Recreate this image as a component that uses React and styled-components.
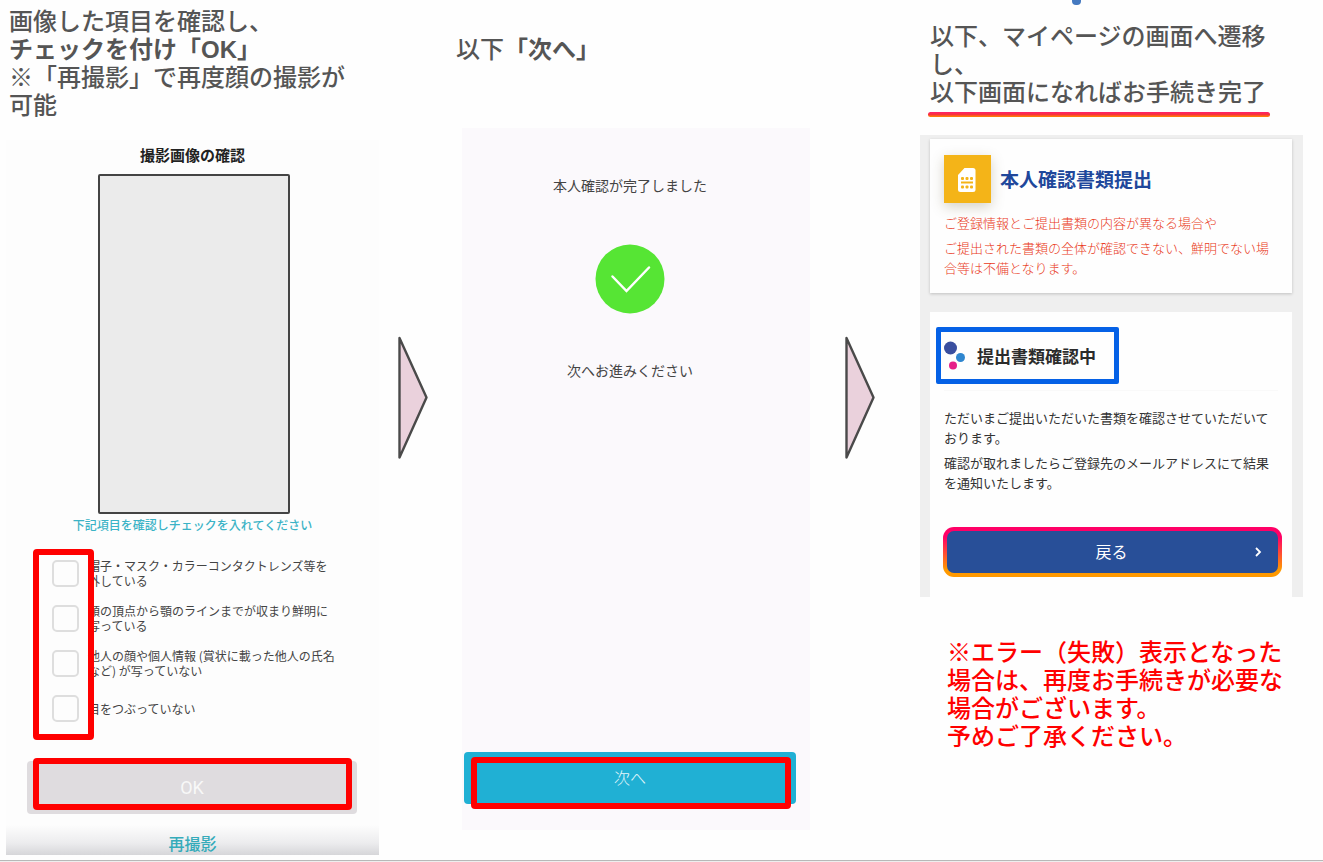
import React from "react";
import styled, { createGlobalStyle } from "styled-components";

const GlobalStyle = createGlobalStyle`
  body {
    margin: 0;
    background-color: #fefefe;
    font-family: "Noto Sans CJK JP", sans-serif;
    color: #333;
  }

  button {
    font-family: inherit;
    cursor: pointer;
  }
`;

const Page = styled.div`
  display: flex;
  flex-direction: column;
  min-height: 100vh;
`;

const Steps = styled.main`
  flex: 1;
  display: grid;
  grid-template-columns: 373fr 77px 354fr 110px 383fr;
  align-items: start;
  padding: 0 20px 4px 6px;
`;

const BottomRule = styled.footer`
  height: 1px;
  border-top: 1px solid #b8b8b8;
  background-color: #eee;
`;

const Step = styled.section`
  position: relative;
  min-width: 0;
  padding-top: ${props => props.$top}px;
`;

const Lead = styled.h2`
  margin: 0;
  padding-left: ${props => props.$indent || 0}px;
  font-family: "Liberation Sans", "Noto Sans CJK JP", sans-serif;
  font-size: 24px;
  font-weight: 500;
  line-height: 28px;
  white-space: nowrap;
  color: #555;

  strong {
    font-weight: bold;
  }
`;

const ArrowCell = styled.div`
  display: flex;
  justify-content: center;
  padding: 336px 10px 0 0;
`;

/* Red marker drawn over the controls the reader has to touch */
const Marker = styled.span`
  position: absolute;
  box-sizing: border-box;
  border: 6px solid #f00;
  border-radius: 4px;
  pointer-events: none;
`;

const PhotoPanel = styled.div`
  display: flex;
  flex-direction: column;
  margin-top: 20px;
  padding-top: 5px;
  background-color: #fdfdfd;
`;

const PanelTitle = styled.h3`
  margin: 0;
  font-size: 15px;
  line-height: 20px;
  text-align: center;
  color: #222;
`;

const Photo = styled.div`
  box-sizing: border-box;
  width: 192px;
  height: 340px;
  margin: 9px 89px 0 auto;
  border: 2px solid #444;
  border-radius: 2px;
  background-color: #ebebeb;
`;

const Hint = styled.p`
  margin: 1px 0 14px;
  font-size: 12px;
  font-weight: 500;
  line-height: 20px;
  text-align: center;
  color: #3bb3c6;
`;

const CheckList = styled.ul`
  position: relative;
  display: grid;
  gap: 15px;
  margin: 0 0 0 27px;
  padding: 9px 0 17px 19px;
  list-style: none;
`;

const CheckListMarker = styled(Marker)`
  top: 0;
  bottom: 0;
  left: 0;
  width: 61px;
`;

const CheckRow = styled.li`
  display: flex;
  align-items: center;
  gap: 9px;
  min-height: 30px;
`;

const CheckBox = styled.input`
  appearance: none;
  flex: none;
  box-sizing: border-box;
  width: 27px;
  height: 27px;
  margin: 0;
  border: 2px solid #dedede;
  border-radius: 5px;
  background-color: #fdfdfd;

  &:checked {
    background-color: #3bb3c6;
  }
`;

const CheckLabel = styled.label`
  max-width: 251px;
  font-size: 12px;
  line-height: 15px;
  color: #444;
`;

const ButtonWrap = styled.div`
  position: relative;
  margin: 21px 22px 0 21px;
`;

const OkButton = styled.button`
  display: block;
  width: 100%;
  height: 53px;
  padding: 0;
  border: 0;
  border-radius: 4px;
  background-color: #dfdcdf;
  font-family: Roboto, sans-serif;
  font-size: 18px;
  color: #f8f8f8;
`;

const OkMarker = styled(Marker)`
  top: -3px;
  left: 6px;
  right: 5px;
  height: 52px;
`;

const RetakeBar = styled.div`
  display: flex;
  justify-content: center;
  margin-top: 11px;
  padding: 8px 0 2px;
  background: linear-gradient(#fdfdfd, #ececee 60%, #d6d6d9);
`;

const RetakeButton = styled.button`
  padding: 0;
  border: 0;
  background: none;
  font-size: 16px;
  font-weight: 500;
  line-height: 20px;
  color: #35abba;
`;

const DonePanel = styled.div`
  display: flex;
  flex-direction: column;
  box-sizing: border-box;
  min-height: 702px;
  margin: 64px 0 0 6px;
  padding: 47px 14px 26px 2px;
  background-color: #fbf9fc;

  svg {
    align-self: center;
    margin: 49px 0 46px;
  }
`;

const DoneText = styled.p`
  margin: 0;
  font-size: 14px;
  line-height: 20px;
  text-align: center;
  color: #444;
`;

const NextWrap = styled.div`
  position: relative;
  margin-top: auto;
`;

const NextButton = styled.button`
  display: block;
  width: 100%;
  height: 52px;
  padding: 0 0 2px;
  border: 0;
  border-radius: 4px;
  background-color: #20b0d4;
  font-size: 16px;
  font-weight: 300;
  color: #e4f7fb;
`;

const NextMarker = styled(Marker)`
  top: 5px;
  left: 7px;
  right: 5px;
  height: 52px;
`;

const BlueTip = styled.span`
  position: absolute;
  top: 0;
  left: 152px;
  width: 9px;
  height: 5px;
  border-radius: 0 0 4px 4px;
  background-color: #4579c0;
`;

const Underline = styled.div`
  max-width: 342px;
  height: 5px;
  margin: 5px 0 0 8px;
  border-radius: 3px;
  background: linear-gradient(#ff1f6b, #f8333c 50%, #ff8a00);
`;

const MyPage = styled.div`
  margin-top: 18px;
  padding: 4px 11px 0 10px;
  background-color: #efefef;
`;

const Card = styled.article`
  padding: ${props => props.$padding};
  background-color: #fefefe;
  box-shadow: 0 1px 3px rgba(0, 0, 0, 0.2);

  & + & {
    margin-top: 19px;
    box-shadow: none;
  }
`;

const CardHeader = styled.header`
  display: flex;
  align-items: center;
  gap: 9px;
  margin-bottom: 10px;
`;

const SimBadge = styled.span`
  width: 47px;
  height: 48px;
  background-color: #f4b418;
  box-shadow: 0 4px 12px rgba(90, 80, 40, 0.25);
`;

const CardTitle = styled.h3`
  margin: 0;
  font-size: 19px;
  line-height: 28px;
  color: #20479b;
`;

const CardText = styled.p`
  margin: 0;
  font-size: 13px;
  font-weight: ${props => (props.$warn ? 300 : 400)};
  line-height: 20px;
  color: ${props => (props.$warn ? "#e93a22" : "#333")};

  & + & {
    margin-top: 5px;
  }
`;

const StatusBox = styled.div`
  display: flex;
  align-items: center;
  gap: 11px;
  box-sizing: border-box;
  width: 183px;
  height: 57px;
  margin-left: -8px;
  padding-left: 3px;
  border: 5px solid #0561e6;
  border-radius: 2px;
`;

const StatusTitle = styled.h3`
  margin: 0;
  font-size: 17px;
  line-height: 24px;
  white-space: nowrap;
  color: #2b2b2b;
`;

const Divider = styled.hr`
  height: 1px;
  margin: 6px 0 17px;
  border: 0;
  background-color: #f9f9f9;
`;

const BackButton = styled.button`
  display: grid;
  grid-template-columns: 14px 1fr 14px;
  align-items: center;
  box-sizing: border-box;
  width: calc(100% + 5px);
  height: 50px;
  margin: 34px 0 0 -1px;
  padding: 0 13px 2px 11px;
  border: 4px solid transparent;
  border-radius: 11px;
  background:
    linear-gradient(#284f98, #284f98) padding-box,
    linear-gradient(#ff0066 20%, #ff9900 85%) border-box;
  font-size: 16px;
  color: #fff;

  span {
    grid-column: 2;
  }
`;

const Notice = styled(Lead)`
  margin: 42px 0 0;
  color: #f00;
`;

const checks = [
  "帽子・マスク・カラーコンタクトレンズ等を外している",
  "額の頂点から顎のラインまでが収まり鮮明に写っている",
  "他人の顔や個人情報 (賞状に載った他人の氏名など) が写っていない",
  "目をつぶっていない"
];

function Arrow() {
  return (
    <ArrowCell>
      <svg width="30" height="124" viewBox="0 0 30 124" aria-hidden="true">
        <path
          d="M1.5 2 L28.5 61.5 L1.5 121.5 Z"
          fill="#ead1dc"
          stroke="#4a4a4a"
          strokeWidth="2.4"
          strokeLinejoin="round"
        />
      </svg>
    </ArrowCell>
  );
}

function SimIcon() {
  return (
    <svg width="47" height="48" viewBox="0 0 47 48" aria-hidden="true">
      <path
        d="M20.5 13H29a2.5 2.5 0 0 1 2.5 2.5V34.5a2.5 2.5 0 0 1-2.5 2.5H16.5a2.5 2.5 0 0 1-2.5-2.5V20Z"
        fill="#fff"
      />
      <g fill="#f4b418">
        <path d="M17 26.5h12v2H17z" />
        <rect x="17" y="22" width="3" height="3" rx="1" />
        <rect x="21.5" y="22" width="3" height="3" rx="1" />
        <rect x="26" y="22" width="3" height="3" rx="1" />
        <rect x="17" y="30.5" width="3" height="3" rx="1" />
        <rect x="21.5" y="30.5" width="3" height="3" rx="1" />
        <rect x="26" y="30.5" width="3" height="3" rx="1" />
      </g>
    </svg>
  );
}

function PhotoStep() {
  return (
    <Step $top={8}>
      <Lead $indent={3}>
        画像した項目を確認し、
        <br />
        <strong>チェックを付け「OK」</strong>
        <br />
        ※「再撮影」で再度顔の撮影が
        <br />
        可能
      </Lead>
      <PhotoPanel>
        <PanelTitle>撮影画像の確認</PanelTitle>
        <Photo />
        <Hint>下記項目を確認しチェックを入れてください</Hint>
        <CheckList>
          {checks.map((text, i) => (
            <CheckRow key={text}>
              <CheckBox type="checkbox" id={`check-${i}`} />
              <CheckLabel htmlFor={`check-${i}`}>{text}</CheckLabel>
            </CheckRow>
          ))}
          <CheckListMarker as="li" />
        </CheckList>
        <ButtonWrap>
          <OkButton type="button">OK</OkButton>
          <OkMarker />
        </ButtonWrap>
        <RetakeBar>
          <RetakeButton type="button">再撮影</RetakeButton>
        </RetakeBar>
      </PhotoPanel>
    </Step>
  );
}

function DoneStep() {
  return (
    <Step $top={36}>
      <Lead>
        以下<strong>「次へ」</strong>
      </Lead>
      <DonePanel>
        <DoneText>本人確認が完了しました</DoneText>
        <svg width="70" height="70" viewBox="0 0 70 70" aria-hidden="true">
          <circle cx="35" cy="35" r="34.5" fill="#56e534" />
          <path
            d="M17.5 32.5 L31.5 47 L54 23.5"
            fill="none"
            stroke="#fff"
            strokeWidth="2.5"
            strokeLinecap="round"
          />
        </svg>
        <DoneText>次へお進みください</DoneText>
        <NextWrap>
          <NextButton type="button">次へ</NextButton>
          <NextMarker />
        </NextWrap>
      </DonePanel>
    </Step>
  );
}

function MyPageStep() {
  return (
    <Step $top={23}>
      <BlueTip />
      <Lead $indent={10}>
        以下、マイページの画面へ遷移
        <br />
        し、
        <br />
        以下画面になればお手続き完了
      </Lead>
      <Underline />
      <MyPage>
        <Card $padding="16px 14px 15px">
          <CardHeader>
            <SimBadge>
              <SimIcon />
            </SimBadge>
            <CardTitle>本人確認書類提出</CardTitle>
          </CardHeader>
          <CardText $warn>ご登録情報とご提出書類の内容が異なる場合や</CardText>
          <CardText $warn>
            ご提出された書類の全体が確認できない、鮮明でない場合等は不備となります。
          </CardText>
        </Card>
        <Card $padding="15px 14px 20px">
          <StatusBox>
            <svg width="22" height="32" viewBox="0 0 22 32" aria-hidden="true">
              <circle cx="6.5" cy="8" r="6.5" fill="#3a4f9f" />
              <circle cx="16.5" cy="17.5" r="4.5" fill="#2f86cf" />
              <circle cx="9" cy="25.5" r="4" fill="#e6208a" />
            </svg>
            <StatusTitle>提出書類確認中</StatusTitle>
          </StatusBox>
          <Divider />
          <CardText>
            ただいまご提出いただいた書類を確認させていただいております。
          </CardText>
          <CardText>
            確認が取れましたらご登録先のメールアドレスにて結果を通知いたします。
          </CardText>
          <BackButton type="button">
            <span>戻る</span>
            <svg width="14" height="14" viewBox="0 0 14 14" aria-hidden="true">
              <path d="M5 4 L9 8 L5 12" fill="none" stroke="#fff" strokeWidth="1.8" />
            </svg>
          </BackButton>
        </Card>
      </MyPage>
      <Notice as="p" $indent={27}>
        ※エラー（失敗）表示となった
        <br />
        場合は、再度お手続きが必要な
        <br />
        場合がございます。
        <br />
        予めご了承ください。
      </Notice>
    </Step>
  );
}

export default function App() {
  return (
    <Page>
      <GlobalStyle />
      <Steps>
        <PhotoStep />
        <Arrow />
        <DoneStep />
        <Arrow />
        <MyPageStep />
      </Steps>
      <BottomRule />
    </Page>
  );
}
